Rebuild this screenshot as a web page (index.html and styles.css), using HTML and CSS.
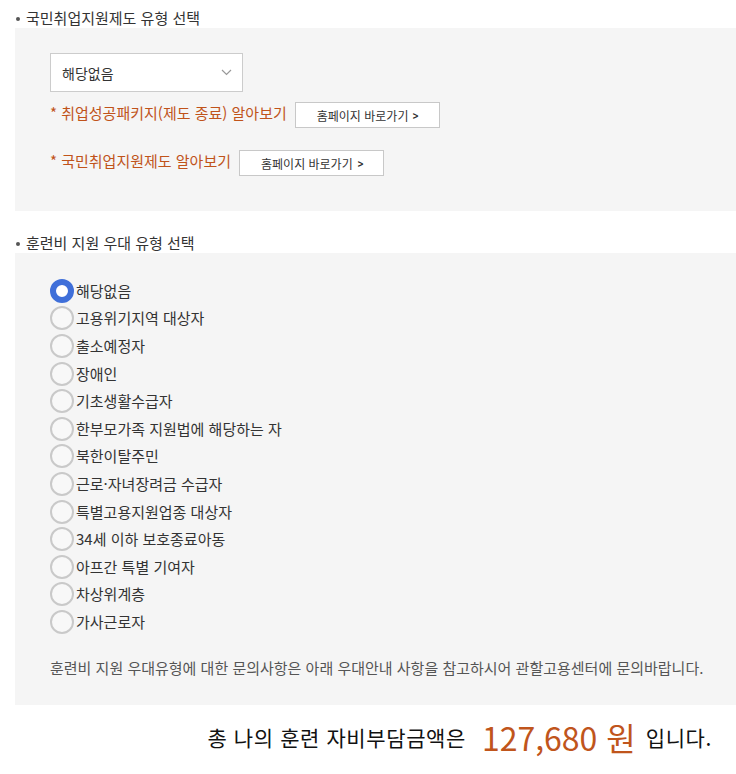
FILE: index.html
```html
<!DOCTYPE html>
<html lang="ko">
	<head>
		<meta charset="UTF-8">
		<title>훈련비 지원</title>
		<link rel="stylesheet" href="styles.css">
	</head>
	<body>
		<div class="wrap">
			<h3 class="sec-title">국민취업지원제도 유형 선택</h3>
			<div class="panel panel-job">
				<div class="select-box">
					<span>해당없음</span>
					<svg class="arrow" width="11" height="7" viewBox="0 0 11 7"><path d="M1 1 L5.5 5.5 L10 1" fill="none" stroke="#999" stroke-width="1.2"/></svg>
				</div>
				<div class="link-row">
					<p class="link-txt">* 취업성공패키지(제도 종료) 알아보기</p>
					<a class="btn-go" href="#">홈페이지 바로가기 <i>&gt;</i></a>
				</div>
				<div class="link-row row2">
					<p class="link-txt">* 국민취업지원제도 알아보기</p>
					<a class="btn-go" href="#">홈페이지 바로가기 <i>&gt;</i></a>
				</div>
			</div>

			<h3 class="sec-title second">훈련비 지원 우대 유형 선택</h3>
			<div class="panel panel-pref">
				<ul class="radio-list">
					<li><label><input type="radio" name="pref" checked>해당없음</label></li>
					<li><label><input type="radio" name="pref">고용위기지역 대상자</label></li>
					<li><label><input type="radio" name="pref">출소예정자</label></li>
					<li><label><input type="radio" name="pref">장애인</label></li>
					<li><label><input type="radio" name="pref">기초생활수급자</label></li>
					<li><label><input type="radio" name="pref">한부모가족 지원법에 해당하는 자</label></li>
					<li><label><input type="radio" name="pref">북한이탈주민</label></li>
					<li><label><input type="radio" name="pref">근로·자녀장려금 수급자</label></li>
					<li><label><input type="radio" name="pref">특별고용지원업종 대상자</label></li>
					<li><label><input type="radio" name="pref">34세 이하 보호종료아동</label></li>
					<li><label><input type="radio" name="pref">아프간 특별 기여자</label></li>
					<li><label><input type="radio" name="pref">차상위계층</label></li>
					<li><label><input type="radio" name="pref">가사근로자</label></li>
				</ul>
				<p class="note">훈련비 지원 우대유형에 대한 문의사항은 아래 우대안내 사항을 참고하시어 관할고용센터에 문의바랍니다.</p>
			</div>

			<div class="total">
				<span>총 나의 훈련 자비부담금액은</span>
				<strong>127,680 원</strong>
				<span>입니다.</span>
			</div>
		</div>
	</body>
</html>
```

FILE: styles.css
```css
* {
	margin: 0;
	padding: 0;
	box-sizing: border-box;
}

body {
	font-family: "Noto Sans CJK KR", "Noto Sans", sans-serif;
	color: #333;
	background: #fff;
}

.sec-title {
	position: relative;
	padding: 8px 0 0 26px;
	font-size: 15px;
	font-weight: normal;
	line-height: 20px;
	color: #333;
}

.sec-title::before {
	content: "";
	position: absolute;
	left: 16px;
	top: 17px;
	width: 4px;
	height: 4px;
	border-radius: 50%;
	background: #555;
}

.sec-title.second {
	padding-top: 22px;
}

.sec-title.second::before {
	top: 31px;
}

.panel {
	margin-left: 15px;
	background: #f5f5f5;
	padding: 25px 35px 35px;
}

.panel-pref {
	padding: 24px 35px 27px;
}

.select-box {
	width: 193px;
	height: 39px;
	background: #fff;
	border: 1px solid #ccc;
	display: flex;
	align-items: center;
	justify-content: space-between;
	padding: 0 10px 0 11px;
	font-size: 14px;
	color: #333;
}

.link-row {
	margin-top: 10px;
	display: flex;
	align-items: flex-start;
	gap: 8px;
}

.link-row.row2 {
	margin-top: 22px;
}

.link-txt {
	font-size: 15px;
	line-height: 22px;
	color: #c0531a;
}

.btn-go {
	display: flex;
	align-items: center;
	height: 26px;
	padding: 0 19px 0 21px;
	border: 1px solid #c8c8c8;
	background: #fff;
	font-size: 12px;
	color: #333;
	text-decoration: none;
}

.btn-go i {
	font-style: normal;
	font-weight: bold;
	margin-left: 4px;
	transform: scaleX(0.8);
}

.radio-list {
	list-style: none;
}

.radio-list li {
	height: 27.6px;
	display: flex;
	align-items: center;
}

.radio-list label {
	display: flex;
	align-items: center;
	font-size: 15px;
	color: #333;
	line-height: 24px;
}

.radio-list input {
	appearance: none;
	-webkit-appearance: none;
	width: 24px;
	height: 24px;
	margin: 0 2px 0 0;
	border-radius: 50%;
	border: 2.5px solid #c9c9c9;
	background: #f8f8f8;
}

.radio-list input:checked {
	border: 6px solid #3f6fd9;
	background: #fff;
}

.note {
	margin-top: 22px;
	font-size: 15px;
	line-height: 20px;
	white-space: nowrap;
	color: #555;
}

.total {
	height: 64px;
	display: flex;
	align-items: center;
	justify-content: flex-end;
	padding-right: 24px;
	font-size: 21px;
	letter-spacing: 0.6px;
	color: #111;
}

.total strong {
	margin: 0 10px 0 16px;
	font-size: 32px;
	font-weight: normal;
	letter-spacing: 0;
	color: #c0551c;
	line-height: 40px;
}
```
